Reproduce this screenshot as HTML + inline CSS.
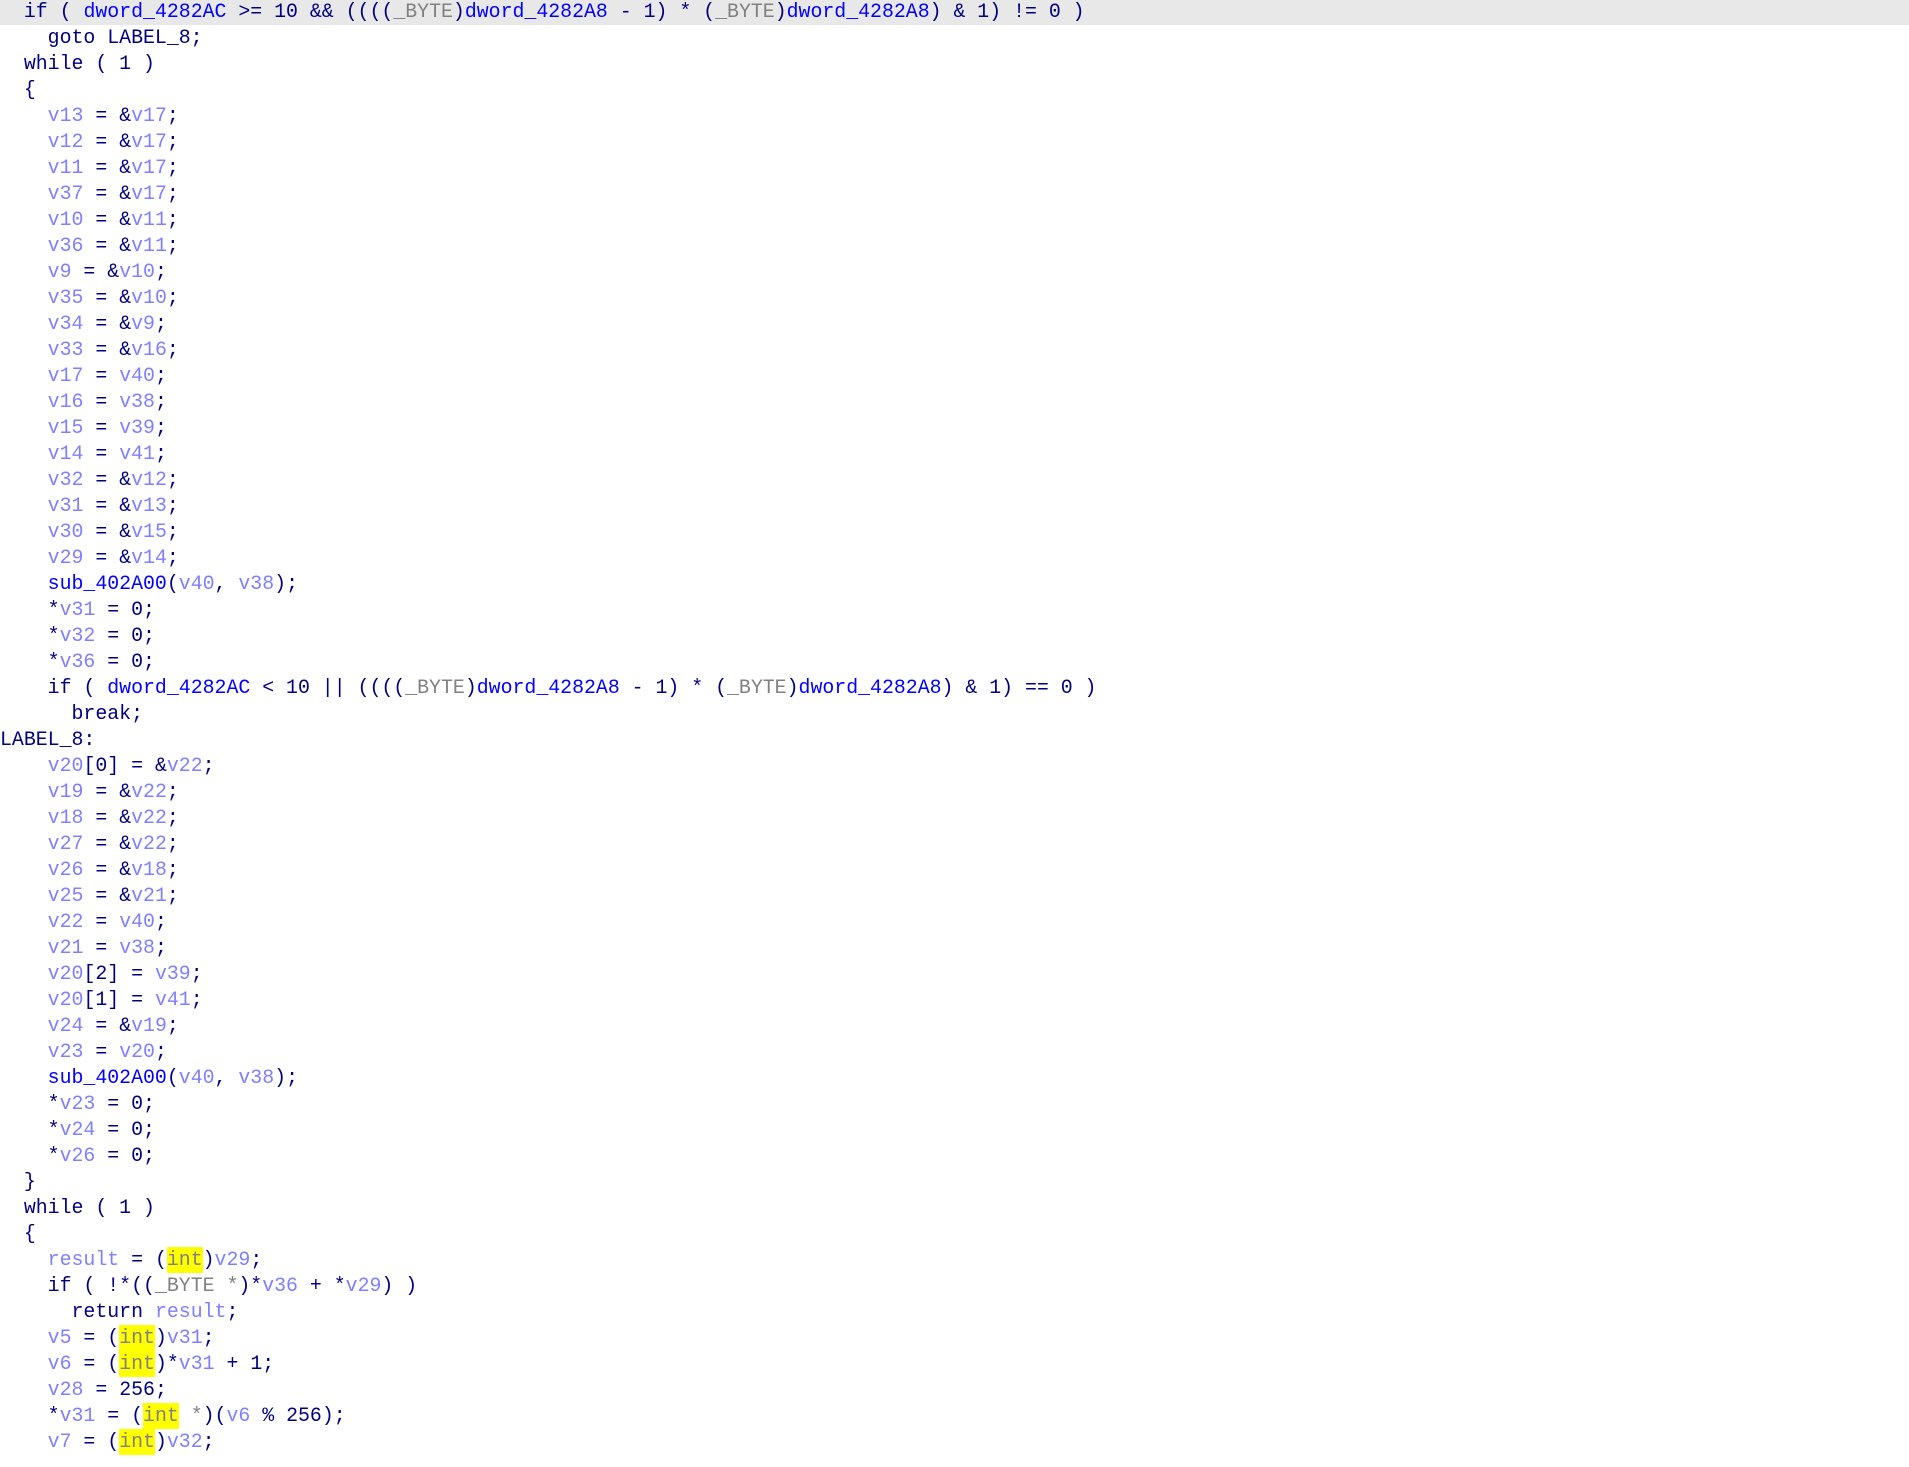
<!DOCTYPE html>
<html><head><meta charset="utf-8"><style>
html,body{margin:0;padding:0;background:#fff;width:1909px;height:1467px;overflow:hidden}
#c{position:absolute;left:0;top:-1px;width:1909px;font-family:"Liberation Mono",monospace;font-size:19.88px;color:#000080}
#c div{height:26px;line-height:26px;white-space:pre}
#band{position:absolute;left:0;top:0;width:1909px;height:25px;background:#e8e8e8}
.g{color:#0000ff}.v{color:#8080ff}.t{color:#808080}.h{background:#ffff00;color:#808080;display:inline-block;height:26px}
</style></head><body><div id="band"></div><div id="c">
<div>  if ( <span class="g">dword_4282AC</span> &gt;= 10 &amp;&amp; ((((<span class="t">_BYTE</span>)<span class="g">dword_4282A8</span> - 1) * (<span class="t">_BYTE</span>)<span class="g">dword_4282A8</span>) &amp; 1) != 0 )</div>
<div>    goto LABEL_8;</div>
<div>  while ( 1 )</div>
<div>  {</div>
<div>    <span class="v">v13</span> = &amp;<span class="v">v17</span>;</div>
<div>    <span class="v">v12</span> = &amp;<span class="v">v17</span>;</div>
<div>    <span class="v">v11</span> = &amp;<span class="v">v17</span>;</div>
<div>    <span class="v">v37</span> = &amp;<span class="v">v17</span>;</div>
<div>    <span class="v">v10</span> = &amp;<span class="v">v11</span>;</div>
<div>    <span class="v">v36</span> = &amp;<span class="v">v11</span>;</div>
<div>    <span class="v">v9</span> = &amp;<span class="v">v10</span>;</div>
<div>    <span class="v">v35</span> = &amp;<span class="v">v10</span>;</div>
<div>    <span class="v">v34</span> = &amp;<span class="v">v9</span>;</div>
<div>    <span class="v">v33</span> = &amp;<span class="v">v16</span>;</div>
<div>    <span class="v">v17</span> = <span class="v">v40</span>;</div>
<div>    <span class="v">v16</span> = <span class="v">v38</span>;</div>
<div>    <span class="v">v15</span> = <span class="v">v39</span>;</div>
<div>    <span class="v">v14</span> = <span class="v">v41</span>;</div>
<div>    <span class="v">v32</span> = &amp;<span class="v">v12</span>;</div>
<div>    <span class="v">v31</span> = &amp;<span class="v">v13</span>;</div>
<div>    <span class="v">v30</span> = &amp;<span class="v">v15</span>;</div>
<div>    <span class="v">v29</span> = &amp;<span class="v">v14</span>;</div>
<div>    <span class="g">sub_402A00</span>(<span class="v">v40</span>, <span class="v">v38</span>);</div>
<div>    *<span class="v">v31</span> = 0;</div>
<div>    *<span class="v">v32</span> = 0;</div>
<div>    *<span class="v">v36</span> = 0;</div>
<div>    if ( <span class="g">dword_4282AC</span> &lt; 10 || ((((<span class="t">_BYTE</span>)<span class="g">dword_4282A8</span> - 1) * (<span class="t">_BYTE</span>)<span class="g">dword_4282A8</span>) &amp; 1) == 0 )</div>
<div>      break;</div>
<div>LABEL_8:</div>
<div>    <span class="v">v20</span>[0] = &amp;<span class="v">v22</span>;</div>
<div>    <span class="v">v19</span> = &amp;<span class="v">v22</span>;</div>
<div>    <span class="v">v18</span> = &amp;<span class="v">v22</span>;</div>
<div>    <span class="v">v27</span> = &amp;<span class="v">v22</span>;</div>
<div>    <span class="v">v26</span> = &amp;<span class="v">v18</span>;</div>
<div>    <span class="v">v25</span> = &amp;<span class="v">v21</span>;</div>
<div>    <span class="v">v22</span> = <span class="v">v40</span>;</div>
<div>    <span class="v">v21</span> = <span class="v">v38</span>;</div>
<div>    <span class="v">v20</span>[2] = <span class="v">v39</span>;</div>
<div>    <span class="v">v20</span>[1] = <span class="v">v41</span>;</div>
<div>    <span class="v">v24</span> = &amp;<span class="v">v19</span>;</div>
<div>    <span class="v">v23</span> = <span class="v">v20</span>;</div>
<div>    <span class="g">sub_402A00</span>(<span class="v">v40</span>, <span class="v">v38</span>);</div>
<div>    *<span class="v">v23</span> = 0;</div>
<div>    *<span class="v">v24</span> = 0;</div>
<div>    *<span class="v">v26</span> = 0;</div>
<div>  }</div>
<div>  while ( 1 )</div>
<div>  {</div>
<div>    <span class="v">result</span> = (<span class="h">int</span>)<span class="v">v29</span>;</div>
<div>    if ( !*((<span class="t">_BYTE *</span>)*<span class="v">v36</span> + *<span class="v">v29</span>) )</div>
<div>      return <span class="v">result</span>;</div>
<div>    <span class="v">v5</span> = (<span class="h">int</span>)<span class="v">v31</span>;</div>
<div>    <span class="v">v6</span> = (<span class="h">int</span>)*<span class="v">v31</span> + 1;</div>
<div>    <span class="v">v28</span> = 256;</div>
<div>    *<span class="v">v31</span> = (<span class="h">int</span><span class="t"> *</span>)(<span class="v">v6</span> % 256);</div>
<div>    <span class="v">v7</span> = (<span class="h">int</span>)<span class="v">v32</span>;</div>
</div></body></html>
